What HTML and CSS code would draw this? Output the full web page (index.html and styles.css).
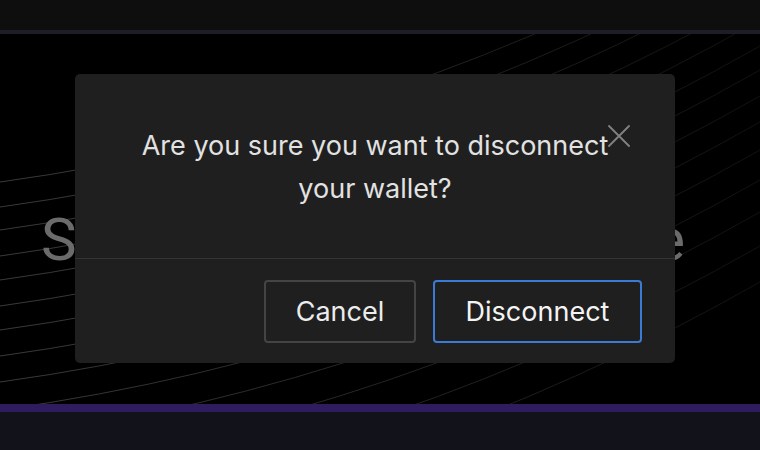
FILE: index.html
```html
<!DOCTYPE html>
<html lang="en">
<head>
<meta charset="utf-8">
<title>Disconnect wallet</title>
<link rel="stylesheet" href="styles.css">
</head>
<body>
<header class="topbar"></header>
<main class="hero">
  <svg class="hero-lines" width="760" height="370" viewBox="0 0 760 370" aria-hidden="true">
    <defs>
      <linearGradient id="fade" gradientUnits="userSpaceOnUse" x1="0" y1="0" x2="760" y2="0">
        <stop offset="0" stop-color="#3a3a3a"/>
        <stop offset="0.5" stop-color="#242424"/>
        <stop offset="1" stop-color="#111111"/>
      </linearGradient>
    </defs>
    <g fill="none" stroke="url(#fade)" stroke-width="1">
      <path d="M0,148 Q400,93 760,-112"/>
      <path d="M0,173 Q400,118 760,-87"/>
      <path d="M0,196 Q400,141 760,-64"/>
      <path d="M0,222 Q400,167 760,-38"/>
      <path d="M0,246 Q400,191 760,-14"/>
      <path d="M0,272 Q400,217 760,12"/>
      <path d="M0,296 Q400,241 760,36"/>
      <path d="M0,322 Q400,267 760,62"/>
      <path d="M0,348 Q400,293 760,88"/>
      <path d="M0,376 Q400,321 760,116"/>
      <path d="M0,406 Q400,351 760,146"/>
      <path d="M0,438 Q400,383 760,178"/>
      <path d="M0,472 Q400,417 760,212"/>
      <path d="M0,508 Q400,453 760,248"/>
    </g>
  </svg>
  <h1 class="headline">Simplify your Finance</h1>

  <div class="modal" role="dialog" aria-modal="true">
    <div class="modal-body">
      <p class="modal-text">Are you sure you want to disconnect your wallet?</p>
      <button class="modal-close" aria-label="Close">
        <svg width="22" height="22" viewBox="0 0 22 22">
          <path d="M1 1 L21 21 M21 1 L1 21" stroke="#828282" stroke-width="1.8" fill="none" stroke-linecap="round"/>
        </svg>
      </button>
    </div>
    <div class="modal-footer">
      <button class="btn btn-cancel">Cancel</button>
      <button class="btn btn-primary">Disconnect</button>
    </div>
  </div>
</main>
<div class="accent"></div>
<footer class="footer"></footer>
</body>
</html>
```

FILE: styles.css
```css
* { box-sizing: border-box; }

html, body {
  margin: 0;
  padding: 0;
  background: #000;
  font-family: Inter, "Noto Sans", sans-serif;
}

body {
  width: 760px;
  height: 450px;
  overflow: hidden;
}

.topbar {
  height: 34px;
  background: #0e0e0e;
  border-bottom: 4px solid #1c1d27;
}

.hero {
  position: relative;
  height: 370px;
  overflow: hidden;
  background: #000;
  padding-top: 170px;
}

.hero-lines {
  position: absolute;
  left: 0;
  top: 0;
}

.headline {
  position: relative;
  margin: 0 0 0 41px;
  width: 645px;
  font-family: Roboto, "Noto Sans", sans-serif;
  font-weight: 400;
  font-size: 60px;
  line-height: 72px;
  color: #6b6b6b;
  text-align: justify;
  text-align-last: justify;
  letter-spacing: 1px;
}

.modal {
  position: absolute;
  left: 75px;
  top: 40px;
  width: 600px;
  background: #1f1f1f;
  border-radius: 5px;
  display: flex;
  flex-direction: column;
}

.modal-body {
  position: relative;
  padding: 50px 60px 48px;
  border-bottom: 1px solid #343434;
}

.modal-text {
  margin: 0;
  text-align: center;
  font-size: 27px;
  line-height: 43px;
  color: #e2e2e2;
}

.modal-close {
  position: absolute;
  top: 51px;
  right: 45px;
  width: 22px;
  height: 22px;
  padding: 0;
  border: 0;
  background: none;
  display: flex;
}

.modal-footer {
  display: flex;
  justify-content: flex-end;
  gap: 17px;
  padding: 21px 33px 20px;
}

.btn {
  height: 63px;
  padding: 0;
  border-radius: 4px;
  background: #1f1f1f;
  font-family: Inter, "Noto Sans", sans-serif;
  font-size: 27px;
  color: #ececec;
}

.btn-cancel {
  width: 152px;
  border: 2px solid #444;
}

.btn-primary {
  width: 209px;
  border: 2px solid #3b7bd6;
  color: #f4f4f4;
}

.accent {
  height: 8px;
  background: #2d1d5e;
}

.footer {
  height: 38px;
  background: #11121a;
}
```
